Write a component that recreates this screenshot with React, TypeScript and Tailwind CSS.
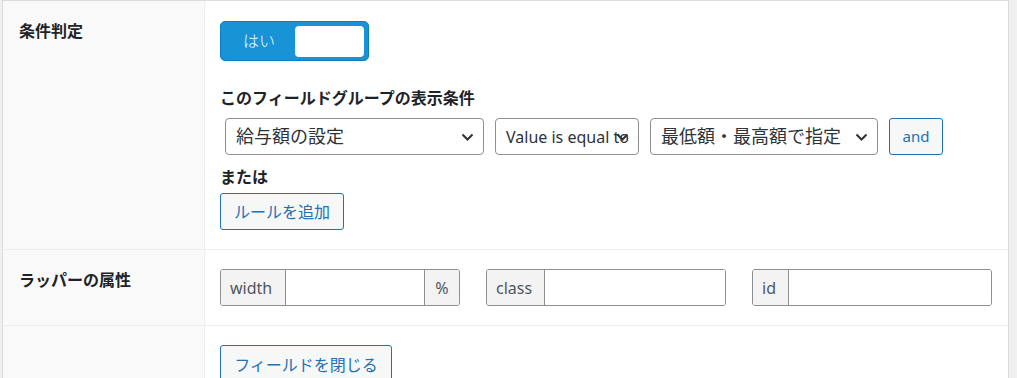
import React from 'react';

const Chevron = () => (
    <svg width="13" height="8" viewBox="0 0 13 8" fill="none">
        <path d="M1.5 1.5L6.5 6.5L11.5 1.5" stroke="#2c3338" strokeWidth="2" />
    </svg>
);

const Select = ({
    text,
    width,
    size,
}: {
    text: string;
    width: string;
    size: string;
}) => (
    <div
        className={`relative flex h-[37px] ${width} ${size} items-center overflow-hidden rounded-[4px] border border-[#8c8f94] bg-white pl-[10px] pr-[8px] text-[#2c3338]`}
    >
        <span className="whitespace-nowrap">{text}</span>
        <span className="absolute right-[9px] top-[14px] flex">
            <Chevron />
        </span>
    </div>
);

const AddonInput = ({
    label,
    labelWidth,
    suffix,
}: {
    label: string;
    labelWidth: string;
    suffix?: string;
}) => (
    <div className="flex h-[37px] w-[240px] overflow-hidden rounded-[3px] border border-[#8c8f94] text-[16px] text-[#50575e]">
        <div
            className={`flex ${labelWidth} shrink-0 items-center border-r border-[#8c8f94] bg-[#f3f3f3] px-[9px]`}
        >
            {label}
        </div>
        <div className="flex-1 bg-white" />
        {suffix && (
            <div className="flex w-[35px] shrink-0 items-center justify-center border-l border-[#8c8f94] bg-[#f3f3f3]">
                {suffix}
            </div>
        )}
    </div>
);

const Row = ({
    label,
    children,
    className,
}: {
    label?: string;
    children: React.ReactNode;
    className: string;
}) => (
    <div className="flex border-b border-[#eeeeee]">
        <div className="w-[202px] shrink-0 border-r border-[#eeeeee] bg-[#f9f9f9] pl-[16px] pt-[18px] text-[16px] font-bold leading-[24px] text-[#1d2327]">
            {label}
        </div>
        <div className={`flex-1 bg-white pl-[15px] ${className}`}>
            {children}
        </div>
    </div>
);

export default function App() {
    return (
        <div className="h-[378px] w-[1017px] overflow-hidden bg-[#f0f0f1] pl-[2px] [font-family:'Noto_Sans','Noto_Sans_CJK_JP',sans-serif]">
            <div className="h-full w-[1007px] border-x border-t border-[#dcdcde] bg-white">
                <Row label="条件判定" className="pt-[20px] pb-[19px]">
                    <div className="flex h-[40px] w-[149px] items-center rounded-[5px] border border-[#0a7fc2] bg-[#1793d6] pl-[4px] pr-[4px]">
                        <span className="w-[70px] pl-[18px] text-[16px] font-light text-white">
                            はい
                        </span>
                        <div className="h-[31px] w-[69px] rounded-[4px] bg-white" />
                    </div>
                    <div className="mt-[25px] text-[16px] font-bold leading-[24px] text-[#1d2327]">
                        このフィールドグループの表示条件
                    </div>
                    <div className="mt-[8px] flex gap-[11px] pl-[5px]">
                        <Select text="給与額の設定" width="w-[259px]" size="text-[18px]" />
                        <Select text="Value is equal to" width="w-[144px]" size="text-[16px]" />
                        <Select text="最低額・最高額で指定" width="w-[228px]" size="text-[18px]" />
                        <div className="flex h-[37px] w-[54px] items-center justify-center rounded-[3px] border border-[#2271b1] bg-[#f6f7f7] text-[15px] text-[#2271b1]">
                            and
                        </div>
                    </div>
                    <div className="mt-[10px] text-[16px] font-bold leading-[24px] text-[#1d2327]">
                        または
                    </div>
                    <div className="mt-[4px] flex h-[37px] w-[124px] items-center justify-center rounded-[3px] border border-[#2271b1] bg-[#f6f7f7] text-[16px] text-[#2271b1]">
                        ルールを追加
                    </div>
                </Row>
                <Row label="ラッパーの属性" className="pt-[19px] pb-[19px]">
                    <div className="flex gap-[26px]">
                        <AddonInput label="width" labelWidth="w-[65px]" suffix="%" />
                        <AddonInput label="class" labelWidth="w-[58px]" />
                        <AddonInput label="id" labelWidth="w-[36px]" />
                    </div>
                </Row>
                <Row className="pt-[19px] pb-[19px]">
                    <div className="flex h-[40px] w-[172px] items-center justify-center rounded-[3px] border border-[#2271b1] bg-[#f6f7f7] text-[16px] text-[#2271b1]">
                        フィールドを閉じる
                    </div>
                </Row>
            </div>
        </div>
    );
}
